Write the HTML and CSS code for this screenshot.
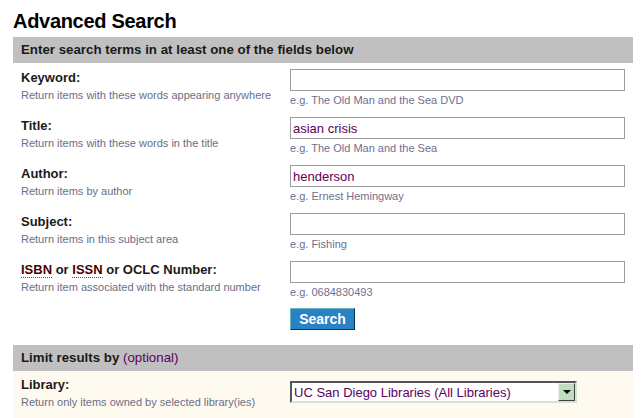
FILE: index.html
```html
<!DOCTYPE html>
<html lang="en">
<head>
    <meta charset="UTF-8">
    <meta name="viewport" content="width=device-width, initial-scale=1.0">
    <title>Advanced Search</title>
    <link rel="stylesheet" href="styles.css">
</head>
<body>
    <div class="page">
        <h1>Advanced Search</h1>

        <form class="search-form">
            <div class="bar">Enter search terms in at least one of the fields below</div>

            <div class="row">
                <div class="info">
                    <label class="label" for="kw">Keyword:</label>
                    <div class="desc">Return items with these words appearing anywhere</div>
                </div>
                <div class="field">
                    <input type="text" id="kw" class="text">
                    <div class="hint">e.g. The Old Man and the Sea DVD</div>
                </div>
            </div>

            <div class="row">
                <div class="info">
                    <label class="label" for="ti">Title:</label>
                    <div class="desc">Return items with these words in the title</div>
                </div>
                <div class="field">
                    <input type="text" id="ti" class="text" value="asian crisis">
                    <div class="hint">e.g. The Old Man and the Sea</div>
                </div>
            </div>

            <div class="row">
                <div class="info">
                    <label class="label" for="au">Author:</label>
                    <div class="desc">Return items by author</div>
                </div>
                <div class="field">
                    <input type="text" id="au" class="text" value="henderson">
                    <div class="hint">e.g. Ernest Hemingway</div>
                </div>
            </div>

            <div class="row">
                <div class="info">
                    <label class="label" for="su">Subject:</label>
                    <div class="desc">Return items in this subject area</div>
                </div>
                <div class="field">
                    <input type="text" id="su" class="text">
                    <div class="hint">e.g. Fishing</div>
                </div>
            </div>

            <div class="row">
                <div class="info">
                    <label class="label" for="sn"><abbr title="International Standard Book Number">ISBN</abbr> or <abbr title="International Standard Serial Number">ISSN</abbr> or OCLC Number:</label>
                    <div class="desc">Return item associated with the standard number</div>
                </div>
                <div class="field">
                    <input type="text" id="sn" class="text">
                    <div class="hint">e.g. 0684830493</div>
                </div>
            </div>

            <div class="row buttons">
                <div class="info"></div>
                <div class="field">
                    <button type="submit" class="btn">Search</button>
                </div>
            </div>

            <div class="bar limit">Limit results by <span class="optional">(optional)</span></div>

            <div class="row library">
                <div class="info">
                    <label class="label" for="lib">Library:</label>
                    <div class="desc">Return only items owned by selected library(ies)</div>
                </div>
                <div class="field">
                    <div class="select">
                        <select id="lib">
                            <option>UC San Diego Libraries (All Libraries)</option>
                        </select>
                        <span class="arrow"></span>
                    </div>
                </div>
            </div>
        </form>
    </div>
</body>
</html>
```

FILE: styles.css
```css
body {
    margin: 0;
    background: #fff;
    font-family: "Liberation Sans", Arial, sans-serif;
    color: #111;
}

.page {
    width: 620px;
    margin-left: 13px;
}

h1 {
    margin: 9px 0 4px;
    font-size: 20px;
    line-height: 24px;
    font-weight: bold;
    letter-spacing: -0.3px;
    color: #000;
}

.search-form {
    margin: 0;
}

.bar {
    height: 26px;
    line-height: 26px;
    padding-left: 8px;
    background: #c0c0c0;
    font-size: 13.3px;
    font-weight: bold;
    color: #1a1a1a;
}

.row {
    display: grid;
    grid-template-columns: 269px 335px;
    padding: 6px 0 4px 8px;
    height: 38px;
}

.label {
    display: block;
    margin-top: 1px;
    font-size: 13px;
    line-height: 16px;
    font-weight: bold;
    color: #1a1a1a;
}

.label abbr {
    text-decoration: none;
    border-bottom: 1px dotted #555;
    color: #4a0000;
}

.desc {
    margin-top: 3px;
    font-size: 11px;
    line-height: 13px;
    color: #6a6e88;
}

.text {
    display: block;
    box-sizing: border-box;
    width: 335px;
    height: 22px;
    margin: 0;
    padding: 0 2px;
    border: 1px solid #9c9c9c;
    font-family: "Liberation Sans", Arial, sans-serif;
    font-size: 13px;
    color: #5c005c;
    outline: none;
}

.hint {
    margin-top: 3px;
    font-size: 11px;
    line-height: 13px;
    color: #6f7090;
}

.buttons {
    padding-top: 5px;
    height: 22px;
    padding-bottom: 15px;
}

.btn {
    display: block;
    box-sizing: border-box;
    width: 65px;
    height: 22px;
    margin: 0;
    padding: 0;
    background: #2a82c6;
    border: 1px solid;
    border-color: #6cb4b8 #003848 #003848 #6cb4b8;
    font-family: "Liberation Sans", Arial, sans-serif;
    font-size: 14px;
    font-weight: bold;
    color: #fff;
}

.optional {
    font-weight: normal;
    color: #5c005c;
}

.library {
    background: #fffaf0;
    padding-top: 5px;
    height: 42px;
}

.select {
    display: flex;
    box-sizing: border-box;
    width: 287px;
    height: 22px;
    margin-top: 5px;
    background: #fff;
    border: 2px solid;
    border-color: #555 #d4e4d4 #d4e4d4 #555;
}

.select select {
    flex: 1;
    min-width: 0;
    height: 18px;
    margin: 0;
    padding: 0 0 0 2px;
    border: 0;
    background: #fff;
    -webkit-appearance: none;
    appearance: none;
    font-family: "Liberation Sans", Arial, sans-serif;
    font-size: 13px;
    color: #5c005c;
    outline: none;
}

.arrow {
    position: relative;
    box-sizing: border-box;
    width: 17px;
    height: 18px;
    background: #c0dcc0;
    border: 1px solid;
    border-color: #e8f4e8 #404040 #404040 #e8f4e8;
}

.arrow::after {
    content: "";
    position: absolute;
    left: 4px;
    top: 6px;
    border-left: 4px solid transparent;
    border-right: 4px solid transparent;
    border-top: 4px solid #000;
}
```
